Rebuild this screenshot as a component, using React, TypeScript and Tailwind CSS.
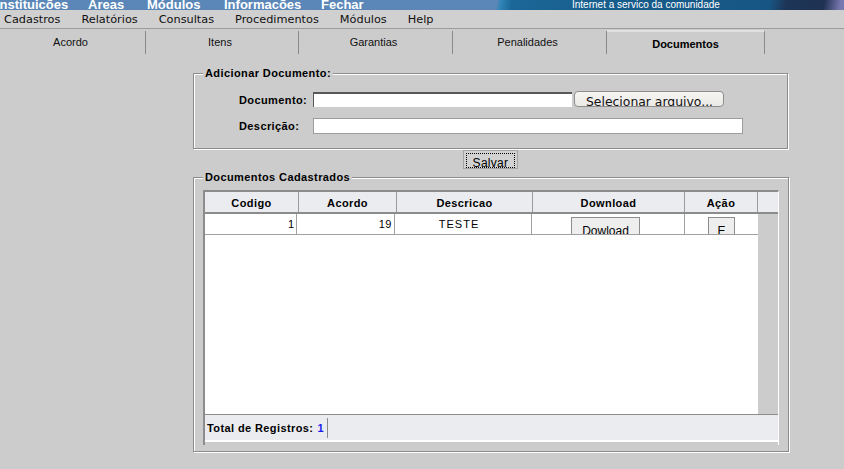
import React from "react";

const lbl = "font-bold text-[11px] leading-[13px] tracking-[0.4px]";

function Tab({ w, label, selected }: { w: string; label: string; selected?: boolean }) {
  if (selected) {
    return (
      <div className={`${w} mt-[1px] h-[24px] border-t-2 border-t-[#e0e0e0] border-r border-r-[#8a8a8a] flex items-center justify-center pt-[3px] font-bold text-[11px]`}>
        {label}
      </div>
    );
  }
  return (
    <div className={`${w} mt-[2px] h-[23px] border-r border-[#8a8a8a] flex items-center justify-center pr-[4px] text-[11px] text-[#111]`}>
      {label}
    </div>
  );
}

export default function App() {
  return (
    <div className="w-[844px] h-[469px] overflow-hidden bg-[#cccccc] text-black font-['Liberation_Sans',Arial,sans-serif]">
      {/* banner */}
      <div className="h-[10px] overflow-hidden flex bg-[linear-gradient(100deg,#5a87b7_0%,#5a87b7_58.8%,#2f84b6_59.3%,#1b6797_60.6%,#165b89_75%,#175684_91%,#1d3658_93%,#1f3152_97.5%,#7a78b0_99.5%)]">
        <div className="w-[572px] shrink-0 flex text-white font-bold text-[13px] leading-[13px] -mt-[2px] whitespace-nowrap">
          <span className="w-[92px] -ml-[4px] shrink-0">Instituicões</span>
          <span className="w-[59px] shrink-0">Áreas</span>
          <span className="w-[77px] shrink-0">Módulos</span>
          <span className="w-[97px] shrink-0">Informacões</span>
          <span className="shrink-0">Fechar</span>
        </div>
        <span className="text-white text-[10px] leading-[10px] whitespace-nowrap">Internet a servico da comunidade</span>
      </div>

      {/* menubar */}
      <div className="h-[19px] bg-[#d0d0d0] border-b border-[#9c9c9c] flex items-center gap-[21px] pl-[4px] font-['DejaVu_Sans',sans-serif] text-[11.3px] leading-[13px] text-[#111]">
        <span>Cadastros</span>
        <span>Relatórios</span>
        <span>Consultas</span>
        <span>Procedimentos</span>
        <span>Módulos</span>
        <span>Help</span>
      </div>

      {/* tabs */}
      <div className="h-[25px] flex items-start">
        <Tab w="w-[146px]" label="Acordo" />
        <Tab w="w-[153px]" label="Itens" />
        <Tab w="w-[154px]" label="Garantias" />
        <Tab w="w-[154px]" label="Penalidades" />
        <Tab w="w-[158px]" label="Documentos" selected />
      </div>

      {/* main */}
      <div className="pl-[193px] pt-[13px] flex flex-col w-[789px]">
        <fieldset className="w-[595px] border border-[#8c8c8c] shadow-[1px_1px_0_#ffffff,inset_1px_1px_0_#ffffff] px-[9px] pt-[11px] pb-[14px]">
          <legend className={`${lbl} px-[2px] bg-[#cccccc]`}>Adicionar Documento:</legend>
          <div className="flex items-start h-[16px]">
            <div className={`${lbl} w-[74px] ml-[36px] pt-[3px]`}>Documento:</div>
            <div className="w-[259px] h-[15px] mt-[1px] bg-white border-t-2 border-l border-[#585858]" />
            <div className="ml-[2px] w-[150px] h-[16px] rounded-[4px] border border-[#8e8e8e] bg-[linear-gradient(#f6f5f3,#ebe9e6)] overflow-hidden pl-[11px] pt-[2px] font-['DejaVu_Sans',sans-serif] text-[12.4px] leading-[15px] whitespace-nowrap text-[#111]">
              Selecionar arquivo...
            </div>
          </div>
          <div className="flex items-center h-[16px] mt-[11px]">
            <div className={`${lbl} w-[74px] ml-[36px]`}>Descrição:</div>
            <div className="w-[430px] h-[16px] bg-white border border-[#9c9c9c]" />
          </div>
        </fieldset>

        <div className="w-[595px] flex justify-center mt-[1px]">
          <div className="w-[55px] h-[19px] border border-[#a4a4a4] bg-[#d2d2d2] p-[2px]">
            <div className="h-[15px] border border-dotted border-black overflow-hidden flex justify-center pt-[2px] text-[12px] leading-[14px] tracking-[0.3px]">
              Salvar
            </div>
          </div>
        </div>

        <fieldset className="w-[595px] mt-[2px] border border-[#8c8c8c] shadow-[1px_1px_0_#ffffff,inset_1px_1px_0_#ffffff] px-[9px] pt-[6px] pb-[6px]">
          <legend className={`${lbl} px-[2px] bg-[#cccccc]`}>Documentos Cadastrados</legend>
          <div className="w-[576px] border-t-2 border-l-2 border-[#8c8c8c] border-r border-r-white flex flex-col">
            {/* header */}
            <div className="flex h-[22px] bg-[#ebecf0] border-b-2 border-[#8c8c8c]">
              {[
                ["w-[94px]", "Codigo"],
                ["w-[98px]", "Acordo"],
                ["w-[136px]", "Descricao"],
                ["w-[152px]", "Download"],
                ["w-[73px]", "Ação"],
                ["w-[20px]", ""],
              ].map(([w, t], i) => (
                <div
                  key={i}
                  className={`${w} ${i < 5 ? "border-r border-[#9a9a9a]" : ""} flex items-center justify-center pt-[2px] ${lbl}`}
                >
                  {t}
                </div>
              ))}
            </div>
            {/* body */}
            <div className="flex h-[200px]">
              <div className="w-[553px] bg-white flex flex-col">
                <div className="flex h-[21px] border-b border-[#a0a0a0] overflow-hidden text-[11px] leading-[13px]">
                  <div className="w-[92px] border-r border-[#a0a0a0] flex items-center justify-end pr-[2px] pt-[1px]">1</div>
                  <div className="w-[98px] border-r border-[#a0a0a0] flex items-center justify-end pr-[2px] pt-[1px] tracking-[0.5px]">19</div>
                  <div className="w-[137px] border-r border-[#a0a0a0] flex items-center justify-center pt-[1px] pr-[8px] tracking-[1px]">TESTE</div>
                  <div className="w-[153px] border-r border-[#a0a0a0] flex justify-center">
                    <div className="mt-[3px] ml-[-5px] w-[69px] h-[22px] shrink-0 bg-[#eeeeee] border border-[#8c8c8c] border-b-0 flex justify-center pt-[6px] text-[12px] leading-[14px]">
                      Dowload
                    </div>
                  </div>
                  <div className="w-[73px] flex justify-center">
                    <div className="mt-[3px] w-[27px] h-[22px] shrink-0 bg-[#eeeeee] border border-[#8c8c8c] border-b-0 flex justify-center pt-[6px] text-[12px] leading-[14px]">
                      E
                    </div>
                  </div>
                </div>
              </div>
              <div className="flex-1 bg-[#cccccc]" />
            </div>
            {/* footer */}
            <div className="h-[26px] border-t border-[#8c8c8c] bg-[#ebecf0] flex items-center pl-[2px]">
              <div className="flex items-center h-[20px] border-r border-[#8c8c8c] pr-[3px] pt-[2px]">
                <span className={lbl}>Total de Registros:</span>
                <span className={`${lbl} text-[#1a1aee] ml-[4px]`}>1</span>
              </div>
            </div>
            <div className="h-[2px] bg-white" />
            <div className="h-[3px] bg-[#cccccc]" />
          </div>
        </fieldset>
      </div>
    </div>
  );
}
